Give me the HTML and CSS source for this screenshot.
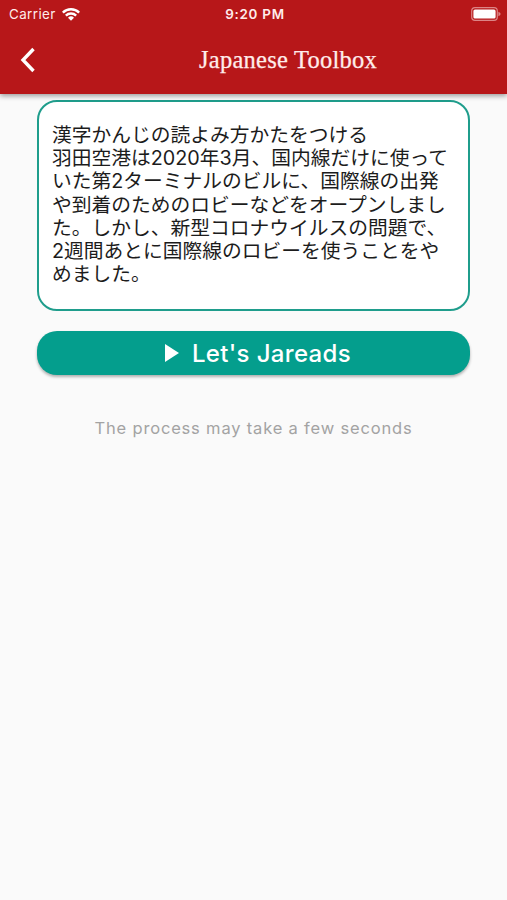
FILE: index.html
```html
<!DOCTYPE html>
<html lang="ja">
<head>
  <meta charset="UTF-8" />
  <meta name="viewport" content="width=device-width, initial-scale=1.0" />
  <title>Japanese Toolbox</title>
  <link rel="stylesheet" href="styles.css">
</head>
<body>
  <header>
    <div class="status-bar">
      <div class="carrier">
        <span>Carrier</span>
        <svg class="wifi" viewBox="0 0 18 14" width="18" height="14">
          <path d="M0 4.7a12.7 12.7 0 0 1 18 0l-1.7 1.8a10.3 10.3 0 0 0-14.6 0z" />
          <path d="M3 7.8a8.5 8.5 0 0 1 12 0l-1.7 1.7a6.1 6.1 0 0 0-8.6 0z" />
          <path d="M6 10.8a4.3 4.3 0 0 1 6 0l-3 3z" />
        </svg>
      </div>
      <span class="time">9:20 PM</span>
      <svg class="battery" viewBox="0 0 30 14" width="30" height="14">
        <rect class="battery-case" x="0.7" y="0.7" width="25.6" height="12.6" rx="3.3" />
        <rect x="2.4" y="2.4" width="22.2" height="9.2" rx="1.6" />
        <path class="battery-tip" d="M27.400 4.800Q29.600 5.700 29.600 7T27.400 9.200z" />
      </svg>
    </div>
    <nav>
      <button class="back-btn" aria-label="Back">
        <svg viewBox="0 0 16 26" width="16" height="26"><path d="M13.500 2L3 13l10.500 11" /></svg>
      </button>
      <h1>Japanese Toolbox</h1>
    </nav>
  </header>
  <main>
    <div class="text-box">漢字かんじの読よみ方かたをつける<br>羽田空港は2020年3月、国内線だけに使って<br>いた第2ターミナルのビルに、国際線の出発<br>や到着のためのロビーなどをオープンしまし<br>た。しかし、新型コロナウイルスの問題で、<br>2週間あとに国際線のロビーを使うことをや<br>めました。</div>
    <button class="read-btn">
      <svg viewBox="0 0 14 18" width="14" height="18"><path d="M0 0l14 9-14 9z" /></svg>
      <span>Let's Jareads</span>
    </button>
    <p class="hint">The process may take a few seconds</p>
  </main>
</body>
</html>
```
FILE: styles.css
```css
* { margin: 0; padding: 0; box-sizing: border-box; }
html, body {
  width: 100%; height: 100%; overflow: hidden;
  font-family: Inter, "Noto Sans CJK JP", sans-serif;
  background: #fafafa; color: #1c1c1c;
}
button { border: none; background: none; font-family: inherit; color: #fff; }
svg { display: block; fill: #fff; }
header {
  position: relative;
  height: 94px;
  background: #b71719;
  color: #ffeceb;
  box-shadow: 0 2px 5px rgba(0, 0, 0, 0.38);
}
.status-bar {
  display: grid;
  grid-template-columns: 1fr auto 1fr;
  align-items: center;
  height: 27px;
  padding: 0 6px 0 9px;
  font-size: 13.4px;
}
.carrier { display: flex; align-items: center; gap: 6px; letter-spacing: 0.4px; }
.time { font-weight: 600; letter-spacing: 0.75px; }
.battery { justify-self: end; }
.battery-case { fill: none; stroke: #dc8586; stroke-width: 1.2; }
.battery-tip { fill: #dc8586; }
nav {
  display: flex;
  align-items: center;
  height: 66px;
  padding-left: 20px;
}
.back-btn path { fill: none; stroke: #fff; stroke-width: 3.4; }
h1 {
  margin-left: 163px;
  font-family: "Liberation Serif", serif;
  font-size: 24.5px;
  font-weight: 400;
  letter-spacing: 0.25px;
  -webkit-text-stroke: 0.25px #ffeceb;
  white-space: nowrap;
}
main {
  display: flex;
  flex-direction: column;
  padding: 6px 37px 0;
}
.text-box {
  height: 211px;
  padding: 22px 0 0 13px;
  border: 2.5px solid #1f9d8c;
  border-radius: 20px;
  background: #fff;
  font-size: 19.75px;
  line-height: 23.2px;
  white-space: nowrap;
}
.read-btn {
  display: flex;
  align-items: center;
  justify-content: center;
  gap: 13px;
  height: 44px;
  margin-top: 20px;
  padding-left: 9px;
  border-radius: 20px;
  background: #049e8d;
  box-shadow: 0 2px 3px rgba(0, 0, 0, 0.3);
  font-size: 24px;
  font-weight: 500;
  letter-spacing: 0.35px;
}
.hint {
  margin-top: 42px;
  text-align: center;
  font-size: 16.5px;
  line-height: 22px;
  letter-spacing: 0.82px;
  color: #a3a3a3;
}
```
